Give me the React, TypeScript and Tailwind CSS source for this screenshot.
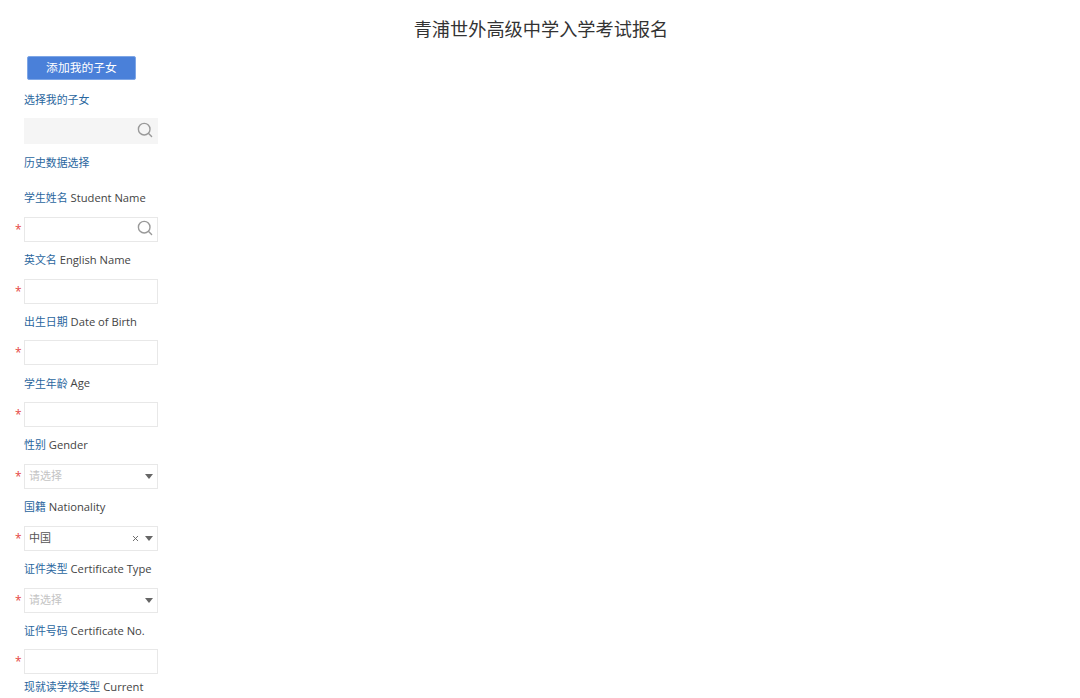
import { X } from "lucide-react"

const fontStack = "font-['Open_Sans','Noto_Sans_CJK_SC',sans-serif]"

type Field = {
  zh: string
  en: string
  kind: "text" | "search" | "select"
  value?: string
}

const fields: Field[] = [
  { zh: "学生姓名", en: "Student Name", kind: "search" },
  { zh: "英文名", en: "English Name", kind: "text" },
  { zh: "出生日期", en: "Date of Birth", kind: "text" },
  { zh: "学生年龄", en: "Age", kind: "text" },
  { zh: "性别", en: "Gender", kind: "select" },
  { zh: "国籍", en: "Nationality", kind: "select", value: "中国" },
  { zh: "证件类型", en: "Certificate Type", kind: "select" },
  { zh: "证件号码", en: "Certificate No.", kind: "text" },
]

function SearchIcon() {
  return (
    <svg width="16" height="16" viewBox="0 0 16 16" fill="none" stroke="#999999" strokeWidth="1.4" className="mb-[2px]">
      <circle cx="7.2" cy="7.2" r="5.8" />
      <path d="M11.6 11.6 L14.6 14.6" strokeLinecap="round" />
    </svg>
  )
}

function Label({ zh, en }: { zh: string; en?: string }) {
  return (
    <div className="flex h-[36.8px] items-center whitespace-nowrap pl-6 text-[10.9px] text-[#2a669e]">
      {zh}
      {en && <span className="ml-[3px] text-[11.2px] text-[#444444]">{en}</span>}
    </div>
  )
}

function FormRow({ field }: { field: Field }) {
  return (
    <>
      <Label zh={field.zh} en={field.en} />
      <div className="flex h-[25px] items-center pl-[15px]">
        <span className="mt-[1px] w-[9px] text-xs leading-4 text-[#e5483f]">*</span>
        <div className="flex h-full w-[134px] items-center justify-end border border-[#e8e8e8] bg-white pl-1 pr-1">
          {field.kind === "search" && <SearchIcon />}
          {field.kind === "select" && (
            <>
              <span className={`flex-1 text-[11px] ${field.value ? "text-[#555555]" : "text-[#c4c4c4]"}`}>
                {field.value ?? "请选择"}
              </span>
              {field.value && <X size={9} strokeWidth={2.5} className="mr-[5px] mt-[1px] text-[#666666]" />}
              <span className="h-0 w-0 border-x-[4px] border-t-[5px] border-x-transparent border-t-[#666666]" />
            </>
          )}
        </div>
      </div>
    </>
  )
}

export default function App() {
  return (
    <div className={`h-[698px] w-[1080px] overflow-hidden bg-white ${fontStack}`}>
      <h1 className="flex h-[56px] items-center justify-center pl-[2px] pt-[3px] text-[18.2px] font-normal text-[#333333]">
        青浦世外高级中学入学考试报名
      </h1>
      <button className="ml-[27px] block h-6 w-[109px] rounded-[2px] border border-[#7ea6e6] bg-[#4a80d9] text-[11.8px] text-white">
        添加我的子女
      </button>
      <div className="mt-[1px] flex h-[37px] items-center pl-6 pt-[2px] text-[10.9px] text-[#2a669e]">选择我的子女</div>
      <div className="ml-6 flex h-[26px] w-[134px] items-center justify-end bg-[#f5f5f5] pr-[5px]">
        <SearchIcon />
      </div>
      <div className="flex h-[36px] items-center pl-6 pt-[2px] text-[10.9px] text-[#2a669e]">历史数据选择</div>
      {fields.map((field) => (
        <FormRow key={field.en} field={field} />
      ))}
      <div className="flex h-[24px] items-center whitespace-nowrap pl-6 pt-[2px] text-[10.9px] text-[#2a669e]">
        现就读学校类型
        <span className="ml-[3px] text-[11.2px] text-[#444444]">Current</span>
      </div>
    </div>
  )
}
